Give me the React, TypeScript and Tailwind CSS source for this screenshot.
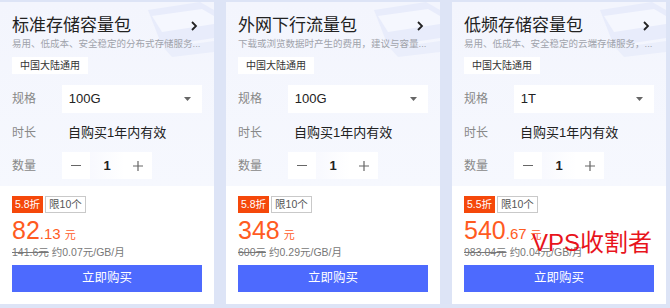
import React from 'react';

interface Pack {
  title: string;
  desc: string;
  spec: string;
  discount: string;
  priceInt: string;
  priceDec?: string;
  original: string;
  unit: string;
}

const packs: Pack[] = [
  {
    title: '标准存储容量包',
    desc: '易用、低成本、安全稳定的分布式存储服务...',
    spec: '100G',
    discount: '5.8折',
    priceInt: '82',
    priceDec: '.13',
    original: '141.6元',
    unit: '约0.07元/GB/月',
  },
  {
    title: '外网下行流量包',
    desc: '下载或浏览数据时产生的费用，建议与容量...',
    spec: '100G',
    discount: '5.8折',
    priceInt: '348',
    original: '600元',
    unit: '约0.29元/GB/月',
  },
  {
    title: '低频存储容量包',
    desc: '易用、低成本、安全稳定的云端存储服务，...',
    spec: '1T',
    discount: '5.5折',
    priceInt: '540',
    priceDec: '.67',
    original: '983.04元',
    unit: '约0.04元/GB/月',
  },
];

const Decor: React.FC = () => (
  <svg className="absolute top-0 right-0" width="100" height="64" viewBox="0 0 100 64" fill="none">
    <path d="M34 8 L86 0 L100 8 L100 36 L48 44 Z" fill="#e8ecfb" />
    <path d="M38 14 L88 7 L100 14 L100 22 L48 30 Z" fill="#f5f7fe" />
    <path d="M50 46 L100 39 L100 50 L58 55 Z" fill="#eaeefb" />
  </svg>
);

const Card: React.FC<{pack: Pack}> = ({pack}) => (
  <div className="w-[214px] shrink-0 flex flex-col bg-white mt-[2px] h-[302px]">
    <div className="relative overflow-hidden h-[184px] bg-gradient-to-b from-[#f3f5fd] to-[#f6f8fe] px-3 pt-[13px]">
      <Decor />
      <div className="relative flex items-center justify-between">
        <h3 className="text-[17px] leading-[22px] text-[#222]">{pack.title}</h3>
        <svg width="10" height="12" viewBox="0 0 10 12" className="mr-[3px]">
          <path d="M3 2 L7 6 L3 10" stroke="#222" strokeWidth="1.8" fill="none" />
        </svg>
      </div>
      <p className="relative text-[9.5px] leading-[14px] text-[#a0a3ab] whitespace-nowrap">
        {pack.desc}
      </p>
      <div className="relative mt-[6px] inline-flex items-center h-[17px] px-[8px] bg-white text-[10px] text-[#333]">
        中国大陆通用
      </div>
      <div className="relative mt-[9px] flex items-center">
        <span className="w-[50px] text-[12px] text-[#888]">规格</span>
        <div className="w-[141px] h-[28px] bg-white flex items-center justify-between pl-[7px] pr-[11px]">
          <span className="text-[13px] text-[#222]">{pack.spec}</span>
          <svg width="7" height="4" viewBox="0 0 7 4">
            <path d="M0 0 L7 0 L3.5 4 Z" fill="#666" />
          </svg>
        </div>
      </div>
      <div className="relative mt-[8px] flex items-center h-[24px]">
        <span className="w-[56px] text-[12px] text-[#888]">时长</span>
        <span className="text-[13px] text-[#222]">自购买1年内有效</span>
      </div>
      <div className="relative mt-[7px] flex items-center">
        <span className="w-[50px] text-[12px] text-[#888]">数量</span>
        <div className="flex h-[27px]">
          <div className="w-[28px] bg-white flex items-center justify-center">
            <span className="block w-[10px] h-[1px] bg-[#666]" />
          </div>
          <div className="w-[34px] bg-gradient-to-r from-[#f8f9fe] to-white flex items-center justify-center text-[13px] font-bold text-[#222]">
            1
          </div>
          <div className="w-[28px] bg-white flex items-center justify-center">
            <svg width="10" height="10" viewBox="0 0 10 10">
              <path d="M5 0 V10 M0 5 H10" stroke="#666" strokeWidth="1.2" />
            </svg>
          </div>
        </div>
      </div>
    </div>
    <div className="px-3 pt-[10px]">
      <div className="flex items-center gap-[2px]">
        <span className="h-[17px] px-[3px] flex items-center bg-[#f5480a] text-white text-[10.5px]">
          {pack.discount}
        </span>
        <span className="h-[17px] px-[3px] flex items-center border border-[#c9c9c9] text-[#555] text-[10.5px]">
          限10个
        </span>
      </div>
      <div className="mt-[3px] flex items-baseline text-[#ff5b1f] h-[28px]">
        <span className="text-[25px] leading-[28px]">{pack.priceInt}</span>
        {pack.priceDec && <span className="text-[15px]">{pack.priceDec}</span>}
        <span className="text-[11px] ml-[4px]">元</span>
      </div>
      <div className="flex items-center gap-[3px] text-[10.5px] leading-[16px] text-[#777]">
        <span className="line-through">{pack.original}</span>
        <span>{pack.unit}</span>
      </div>
      <button
        type="button"
        className="mt-[5px] w-[190px] h-[27px] bg-[#4d6afe] text-white text-[12.5px] flex items-center justify-center"
      >
        立即购买
      </button>
    </div>
  </div>
);

export default function App() {
  return (
    <div
      className="relative w-[670px] h-[308px] overflow-hidden bg-[#dde4f6] flex gap-[12px]"
      style={{fontFamily: '"Liberation Sans", "Noto Sans CJK SC", sans-serif'}}
    >
      {packs.map((p) => (
        <Card key={p.title} pack={p} />
      ))}
      <div className="absolute left-[532px] top-[228px] text-[24px] leading-[30px] text-[#e8141c] whitespace-nowrap">
        VPS收割者
      </div>
    </div>
  );
}
